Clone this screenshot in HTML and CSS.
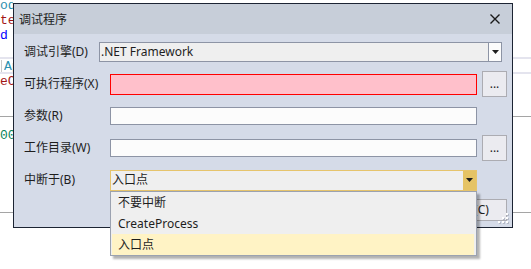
FILE: index.html
```html
<!DOCTYPE html>
<html lang="zh-CN">
<head>
  <meta charset="UTF-8">
  <meta name="viewport" content="width=device-width, initial-scale=1.0">
  <title>调试程序</title>
  <link rel="stylesheet" href="styles.css">
</head>
<body>
  <div class="code">
    <div class="ln l1 teal">ode</div>
    <div class="ln red">tes</div>
    <div class="ln"><span class="blue">d</span> <span class="red">M</span></div>
    <div class="curline"><span class="guide"></span><span class="teal clip">Ap</span></div>
    <div class="ln red">eCo</div>
    <div class="rule r1"></div>
    <div class="ln l7 green">003</div>
    <div class="rule r2"></div>
  </div>

  <div class="dialog">
    <div class="titlebar">
      <span>调试程序</span>
      <svg class="close" width="10" height="10" viewBox="0 0 10 10">
        <path d="M0.5 0.5L9.5 9.5M9.5 0.5L0.5 9.5" stroke="#1a1a1a" stroke-width="1.4"/>
      </svg>
    </div>
    <div class="content">
      <div class="row first">
        <span class="lbl">调试引擎(D)</span>
        <div class="combo">
          <span class="value">.NET Framework</span>
          <span class="drop"><svg width="7" height="4" viewBox="0 0 7 4"><polygon points="0,0 7,0 3.5,4" fill="#1e1e1e"/></svg></span>
        </div>
      </div>
      <div class="row">
        <span class="lbl">可执行程序(X)</span>
        <div class="field invalid"></div>
        <button class="browse">...</button>
      </div>
      <div class="row">
        <span class="lbl">参数(R)</span>
        <div class="field"></div>
      </div>
      <div class="row">
        <span class="lbl">工作目录(W)</span>
        <div class="field"></div>
        <button class="browse">...</button>
      </div>
      <div class="row">
        <span class="lbl">中断于(B)</span>
        <div class="combo open">
          <span class="value">入口点</span>
          <span class="drop"><svg width="7" height="4" viewBox="0 0 7 4"><polygon points="0,0 7,0 3.5,4" fill="#1e1e1e"/></svg></span>
          <ul class="list">
            <li>不要中断</li>
            <li>CreateProcess</li>
            <li class="sel">入口点</li>
          </ul>
        </div>
      </div>
      <div class="footer">
        <button class="btn">确定(O)</button>
        <button class="btn">取消(C)</button>
      </div>
    </div>
    <svg class="grip" width="11" height="11" viewBox="0 0 11 11">
      <g fill="#b4b9c6">
        <rect x="9" y="1" width="2" height="2"/>
        <rect x="5" y="5" width="2" height="2"/><rect x="9" y="5" width="2" height="2"/>
        <rect x="1" y="9" width="2" height="2"/><rect x="5" y="9" width="2" height="2"/><rect x="9" y="9" width="2" height="2"/>
      </g>
      <g fill="#ffffff">
        <rect x="8" y="0" width="2" height="2"/>
        <rect x="4" y="4" width="2" height="2"/><rect x="8" y="4" width="2" height="2"/>
        <rect x="0" y="8" width="2" height="2"/><rect x="4" y="8" width="2" height="2"/><rect x="8" y="8" width="2" height="2"/>
      </g>
    </svg>
  </div>
</body>
</html>
```

FILE: styles.css
```css
body {
  margin: 0;
  background-color: #ffffff;
  width: 531px;
  height: 269px;
  overflow: hidden;
  position: relative;
}
.code {
  font-family: 'Liberation Mono', monospace;
  font-size: 13px;
}
.ln {
  width: 13px;
  height: 15px;
  line-height: 15px;
  white-space: pre;
  overflow: hidden;
}
.l1 {
  margin-top: -2px;
}
.teal { color: #2b91af; }
.red { color: #a31515; }
.blue { color: #0000ff; }
.green { color: #098658; }
.curline {
  margin-top: 14px;
  height: 13px;
  line-height: 15px;
  border-top: 2px solid #e4e4ee;
  border-bottom: 2px solid #e4e4ee;
  display: flex;
  white-space: pre;
}
.clip {
  width: 9px;
  overflow: hidden;
}
.guide {
  width: 1px;
  margin: 1px 2px 0 1px;
  background-color: #c8c8c8;
}
.rule {
  border-top: 1px solid #a5a5a5;
}
.r1 {
  margin-top: 27px;
}
.l7 {
  margin-top: 11px;
}
.r2 {
  margin-top: 69px;
}
.dialog {
  position: absolute;
  left: 13px;
  top: 3px;
  width: 500px;
  height: 225px;
  box-sizing: border-box;
  border: 1px solid #1c2433;
  background-color: #d5dbe8;
  font-family: 'Noto Sans', 'Noto Sans CJK SC', sans-serif;
  font-size: 12px;
  color: #1e1e1e;
}
.titlebar {
  height: 30px;
  background-color: #c7ced9;
  display: flex;
  align-items: center;
  justify-content: space-between;
  padding: 0 12px 0 5px;
}
.content {
  padding: 5px 5px 0 10px;
  display: flex;
  flex-direction: column;
  gap: 6px;
}
.row {
  display: flex;
  align-items: center;
  height: 26px;
}
.lbl {
  width: 86px;
  flex: none;
  line-height: 16px;
}
.first .lbl {
  width: 75px;
}
.combo {
  flex: 1;
  height: 21px;
  box-sizing: border-box;
  border: 1px solid #8d94a5;
  background-color: #efefef;
  display: flex;
  align-items: center;
  position: relative;
  margin-right: 30px;
}
.first .combo {
  height: 20px;
  margin-right: 5px;
}
.value {
  flex: 1;
  padding-left: 1px;
  line-height: 16px;
}
.drop {
  width: 12px;
  align-self: stretch;
  border-left: 1px solid #8d94a5;
  background-color: #fcfcfc;
  display: flex;
  align-items: center;
  justify-content: center;
}
.open {
  border-color: #e6c46c;
}
.open .drop {
  border-left: none;
  width: 13px;
  background-color: #e5c365;
}
.field {
  width: 367px;
  flex: none;
  box-sizing: border-box;
  height: 18px;
  border: 1px solid #8d94a5;
  background-color: #fcfcfc;
}
.invalid {
  height: 21px;
  border-color: #ff0000;
  background-color: #ffc0cb;
}
.browse {
  width: 25px;
  height: 26px;
  margin-left: 5px;
  padding: 0;
  border: 1px solid #acacb2;
  background-color: #ebebf0;
  font-family: 'Noto Sans', sans-serif;
  font-size: 12px;
  color: #1e1e1e;
  line-height: 16px;
}
.list {
  position: absolute;
  left: -1px;
  top: calc(100% + 1px);
  width: calc(100% + 2px);
  box-sizing: border-box;
  margin: 0;
  padding: 0;
  list-style: none;
  border: 1px solid #9ba2b0;
  background-color: #efefef;
  box-shadow: 3px 3px 2px rgba(0, 0, 0, 0.3);
  z-index: 2;
}
.list li {
  height: 21px;
  line-height: 21px;
  padding-left: 6px;
  margin: 0 2px 0 1px;
}
.list li.sel {
  background-color: #fff3c5;
}
.footer {
  display: flex;
  justify-content: flex-end;
  gap: 6px;
}
.btn {
  width: 75px;
  height: 22px;
  padding: 0;
  border: 1px solid #acacb2;
  background-color: #ebebf0;
  font-family: 'Noto Sans', 'Noto Sans CJK SC', sans-serif;
  font-size: 12px;
  color: #1e1e1e;
  line-height: 16px;
}
.grip {
  position: absolute;
  right: 3px;
  bottom: 3px;
}
```
